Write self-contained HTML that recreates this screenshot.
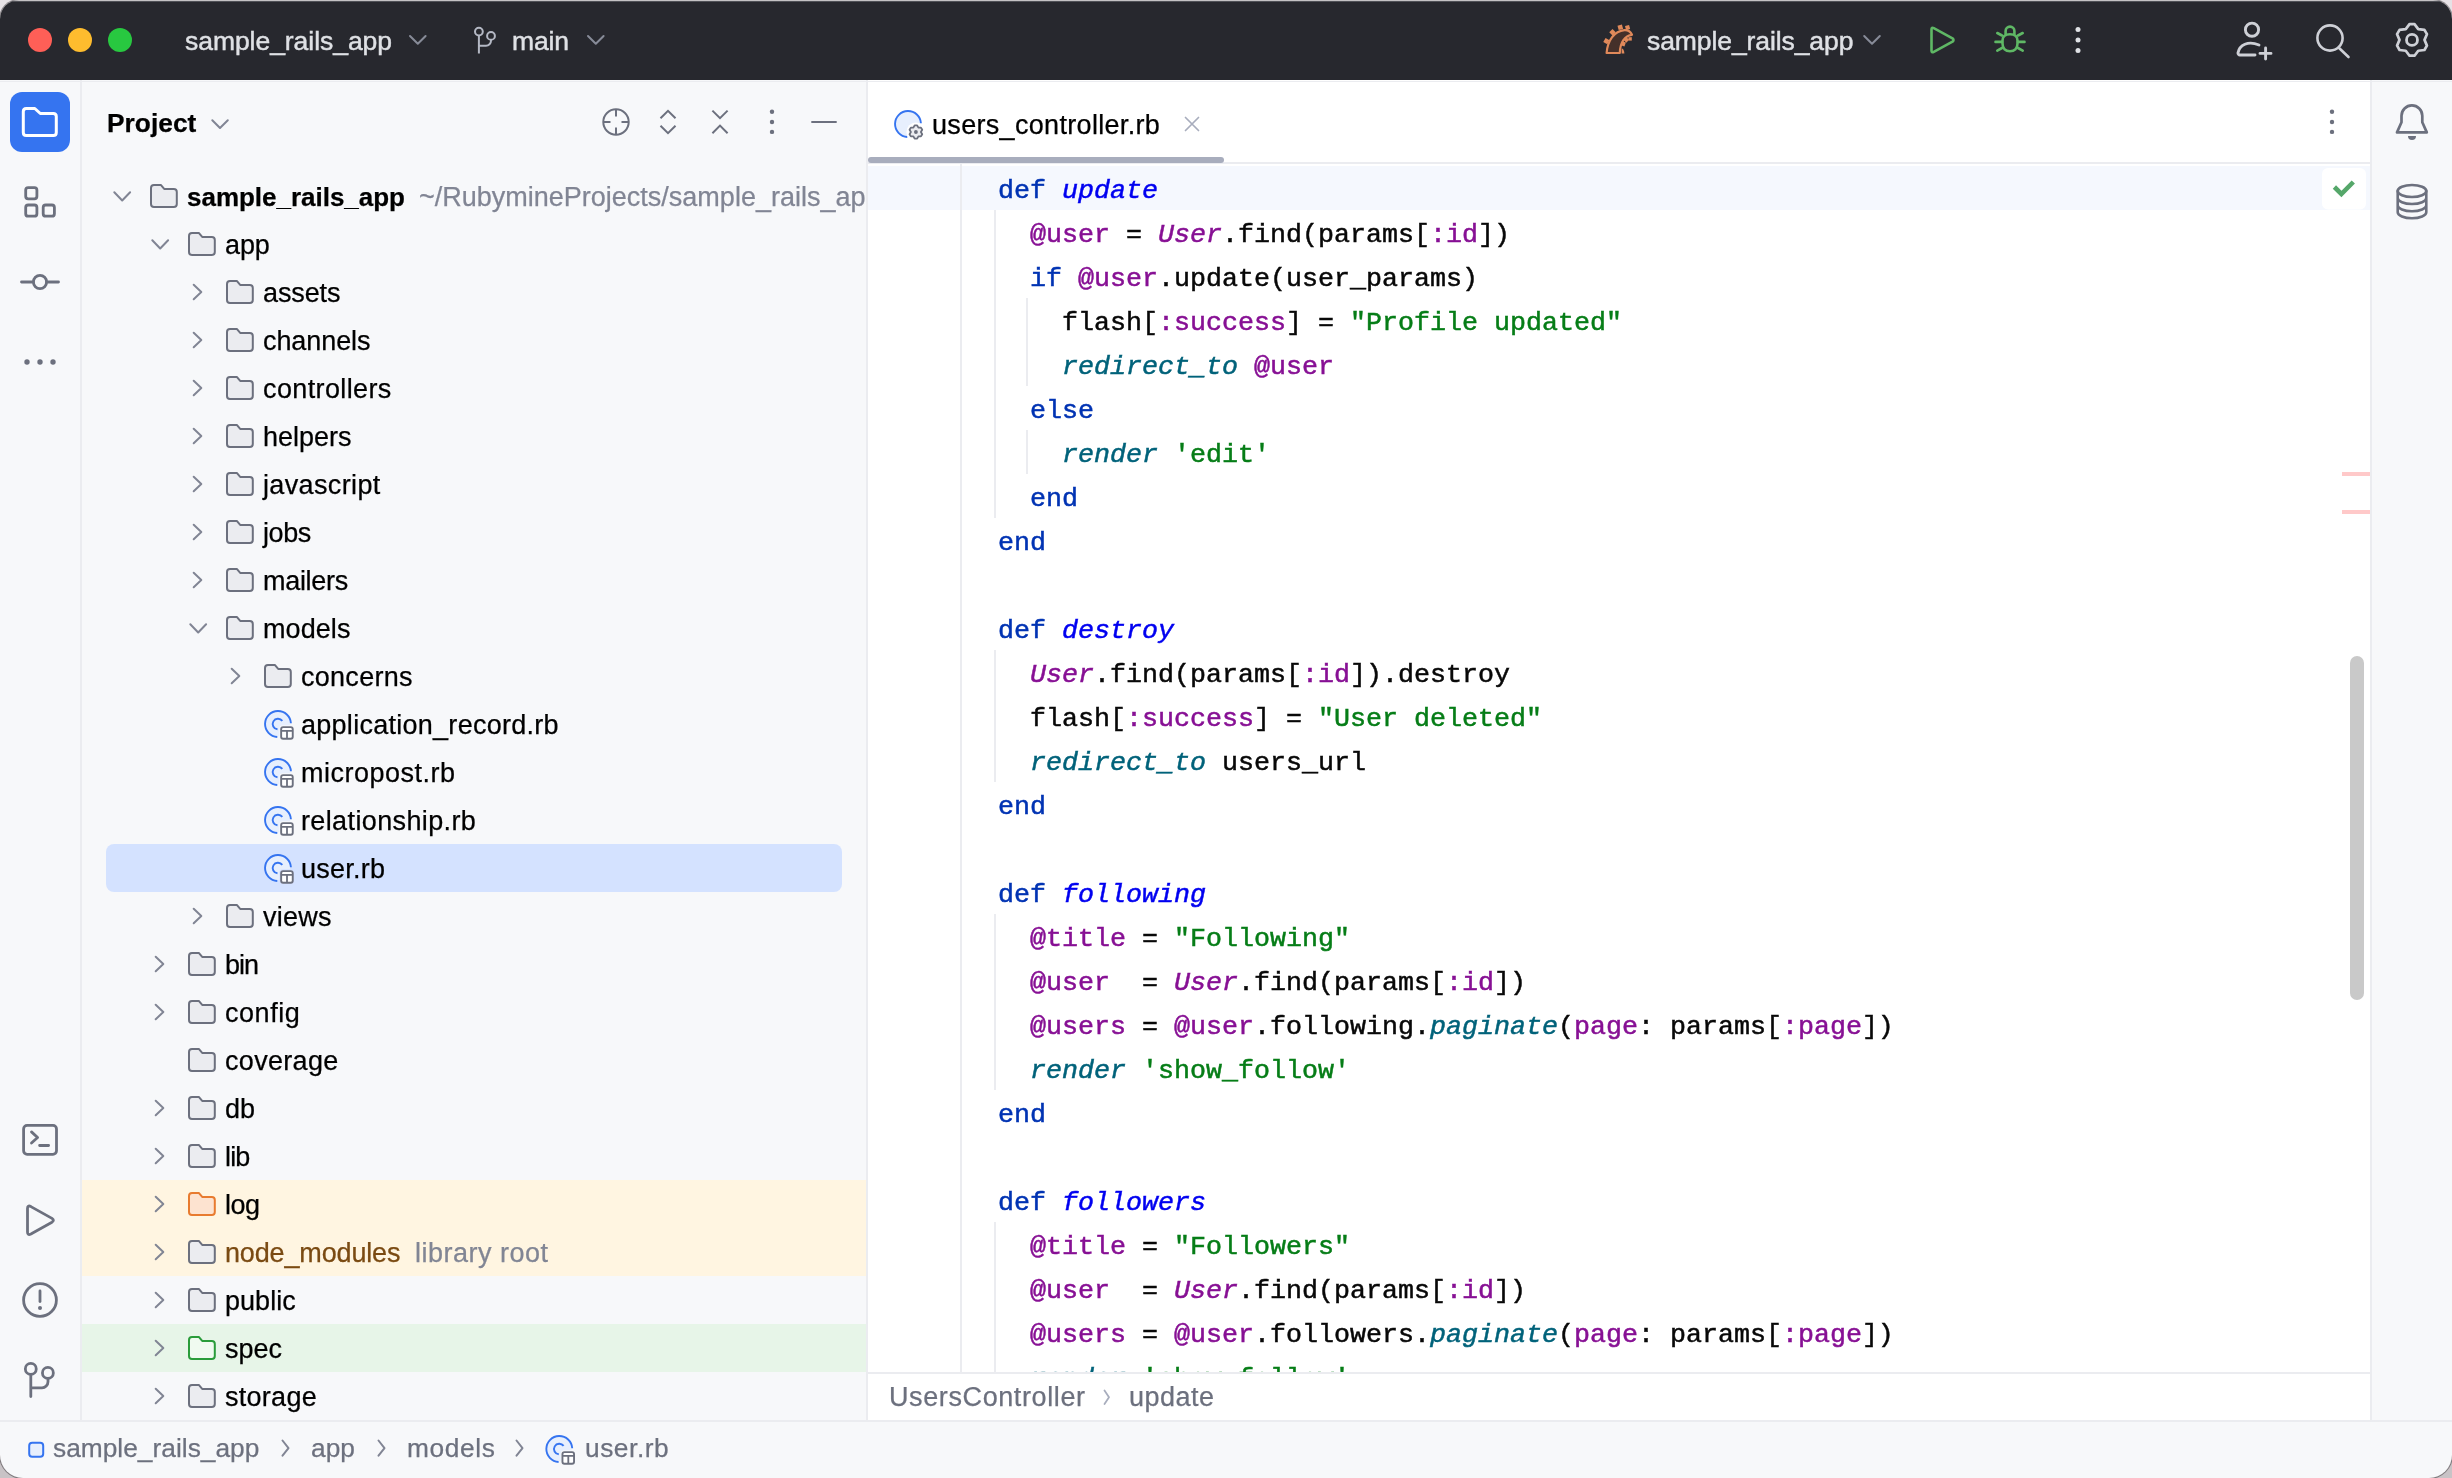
<!DOCTYPE html>
<html><head><meta charset="utf-8">
<style>
*{margin:0;padding:0;box-sizing:border-box}
html,body{width:2452px;height:1478px;overflow:hidden;background:linear-gradient(#e6e2e6 0,#e6e2e6 80px,#c8c3c6 1440px)}
body{font-family:"Liberation Sans",sans-serif;position:relative}
.t,.code{will-change:transform}.t{-webkit-text-stroke:0.25px}.code{-webkit-text-stroke:0.5px}.tb{-webkit-text-stroke:0.45px}
.win{position:absolute;left:0;top:0;width:2452px;height:1478px;border-radius:19px 19px 23px 23px;overflow:hidden;background:#f7f8fa;box-shadow:0 0 0 1px rgba(70,64,68,.55)}
.t{position:absolute;line-height:48px;white-space:pre}
.b{position:absolute}
svg{position:absolute;left:0;top:0;overflow:visible}
.code{position:absolute;font-family:"Liberation Mono",monospace;font-size:26.67px;line-height:44px;white-space:pre;color:#080808}
.k{color:#0033b3}.m{color:#0000f0;font-style:italic}.v{color:#871094}.c{color:#871094;font-style:italic}.s{color:#067d17}.f{color:#00627a;font-style:italic}
</style></head><body>
<div class="win">

<div class="b" style="left:0;top:0;width:2452px;height:80px;background:#27282e"></div>
<div class="b" style="left:80px;top:80px;width:2px;height:1340px;background:#ebecf0"></div>
<div class="b" style="left:82px;top:1180px;width:784px;height:96px;background:#fff5e1"></div>
<div class="b" style="left:82px;top:1324px;width:784px;height:48px;background:#e7f5e8"></div>
<div class="b" style="left:106px;top:844px;width:736px;height:48px;background:#d4e2ff;border-radius:8px"></div>
<div class="b" style="left:866px;top:80px;width:2px;height:1342px;background:#ebecf0"></div>
<div class="b" style="left:868px;top:80px;width:1502px;height:1340px;background:#fff"></div>
<div class="b" style="left:868px;top:162px;width:1502px;height:2px;background:#ebecf0"></div>
<div class="b" style="left:868px;top:166px;width:1502px;height:44px;background:#f5f8fe"></div>
<div class="b" style="left:868px;top:157px;width:356px;height:6px;background:#a8adbd;border-radius:3px"></div>
<div class="b" style="left:868px;top:1372px;width:1502px;height:2px;background:#ebecf0"></div>
<div class="b" style="left:868px;top:1374px;width:1502px;height:46px;background:#fff"></div>
<div class="b" style="left:0;top:81px;width:2452px;height:1px;background:#ebecf0"></div>
<div class="b" style="left:2370px;top:80px;width:2px;height:1342px;background:#ebecf0"></div>
<div class="b" style="left:0;top:1420px;width:2452px;height:2px;background:#ebecf0"></div>
<svg width="2452" height="80">
<circle cx="40" cy="40" r="12" fill="#ff5f57"/><circle cx="80" cy="40" r="12" fill="#febc2e"/><circle cx="120" cy="40" r="12" fill="#28c840"/>
<path d="M410.0,36 l7.8,7.8 l7.8,-7.8" fill="none" stroke="#878b98" stroke-width="2" stroke-linecap="round" stroke-linejoin="round"/>
<path d="M588.0,36 l7.8,7.8 l7.8,-7.8" fill="none" stroke="#878b98" stroke-width="2" stroke-linecap="round" stroke-linejoin="round"/>
<path d="M1864.2,36 l7.8,7.8 l7.8,-7.8" fill="none" stroke="#878b98" stroke-width="2" stroke-linecap="round" stroke-linejoin="round"/>
<g fill="none" stroke="#b4b8c4" stroke-width="2" stroke-linecap="butt"><circle cx="478.9" cy="31.6" r="3.9"/><circle cx="491" cy="35.9" r="3.9"/><path d="M478.9,35.5 V53.5"/><path d="M478.9,45.7 H486 a5,5 0 0 0 5,-5 V39.8"/></g>
<path d="M1931.5,29.5 Q1931.5,27 1933.8,28.2 L1952.5,38.3 Q1954.5,40 1952.5,41.7 L1933.8,51.8 Q1931.5,53 1931.5,50.5 Z" fill="none" stroke="#5fb865" stroke-width="2.6" stroke-linejoin="round"/>
<g fill="none" stroke="#5fb865" stroke-width="2.6" stroke-linecap="round"><path d="M2002.5,40.5 C2002.5,36 2005,34.3 2010,34.3 C2015,34.3 2017.5,36 2017.5,40.5 V43.5 C2017.5,48.5 2014.5,51.2 2010,51.2 C2005.5,51.2 2002.5,48.5 2002.5,43.5 Z"/><path d="M2005.6,34 V31 a4.4,4.4 0 0 1 8.8,0 V34"/><path d="M1997.3,33 L2002,35.5 M1995.5,41.9 H2002 M1997.3,50.6 L2002,48 M2022.7,33 L2018,35.5 M2024.5,41.9 H2018 M2022.7,50.6 L2018,48"/></g>
<g fill="#dfe1e5"><circle cx="2078" cy="29.6" r="2.5"/><circle cx="2078" cy="40.1" r="2.5"/><circle cx="2078" cy="50.6" r="2.5"/></g>
<g fill="none" stroke="#ced0d6" stroke-width="2.9" stroke-linecap="round"><circle cx="2252" cy="29.7" r="6.6"/><path d="M2255,55 H2240 a2,2 0 0 1 -2,-2.3 C2239.5,45 2248,40.5 2259,45"/><path d="M2265.6,48 V59 M2260,53.4 H2271"/></g>
<g fill="none" stroke="#ced0d6" stroke-width="2.6" stroke-linecap="round"><circle cx="2330" cy="38" r="12.6"/><path d="M2339.3,48.3 L2348.5,57"/></g>
<path d="M2409.50,24.10 L2414.50,24.10 L2418.25,29.07 L2424.43,29.83 L2426.94,34.17 L2424.50,39.90 L2426.94,45.63 L2424.43,49.97 L2418.25,50.73 L2414.50,55.70 L2409.50,55.70 L2405.75,50.73 L2399.57,49.97 L2397.06,45.63 L2399.50,39.90 L2397.06,34.17 L2399.57,29.83 L2405.75,29.07 Z" fill="none" stroke="#ced0d6" stroke-width="2.7" stroke-linejoin="round"/>
<circle cx="2412" cy="39.9" r="5.5" fill="none" stroke="#ced0d6" stroke-width="2.8"/>
<path d="M1606.6,53 C1607.5,41 1614,31 1624.5,30.2 C1628,30 1630.5,31.5 1632,34.8 C1625,35.5 1620,42 1619.8,53 Z" fill="#45302a" stroke="#e0895a" stroke-width="2.2" stroke-linejoin="round"/>
<g fill="#e0895a"><rect x="1618" y="25" width="4.6" height="4.6" transform="rotate(-15 1620.2 27.3)"/><rect x="1625.5" y="25.5" width="4.2" height="4.2" transform="rotate(-15 1627.6 27.7)"/><rect x="1610.2" y="29.9" width="4.6" height="4.6" transform="rotate(45 1612.5 32.2)"/><rect x="1604.1" y="38.8" width="4.6" height="4.6" transform="rotate(30 1606.4 41.1)"/><rect x="1624.3" y="37.8" width="4" height="4" transform="rotate(45 1626.3 39.8)"/><rect x="1628.4" y="37.2" width="3.4" height="3.4"/><rect x="1621.5" y="41.8" width="3.8" height="4.2" transform="rotate(20 1623.4 43.8)"/><path d="M1621.6,48.5 Q1624,48.5 1624.4,53.6 L1621.6,53.6 Z"/></g>
</svg>
<div class="t tb" style="left:184.50px;top:16.81px;font-size:26.50px;color:#dfe1e5;letter-spacing:-0.047px;">sample_rails_app</div>
<div class="t tb" style="left:512.00px;top:16.81px;font-size:26.50px;color:#dfe1e5;letter-spacing:-0.151px;">main</div>
<div class="t tb" style="left:1646.60px;top:16.81px;font-size:26.50px;color:#dfe1e5;letter-spacing:-0.087px;">sample_rails_app</div>
<svg width="2452" height="1478">
<rect x="10" y="92" width="60" height="60" rx="12" fill="#3574f0"/>
<path d="M23.3,111.5 Q23.3,108.5 26.3,108.5 H34.8 L40.3,113.5 H53.3 Q56.3,113.5 56.3,116.5 V132.4 Q56.3,135.4 53.3,135.4 H26.3 Q23.3,135.4 23.3,132.4 Z" fill="none" stroke="#fff" stroke-width="3" stroke-linejoin="round"/>
<g fill="none" stroke="#6c707e" stroke-width="2.8" stroke-linecap="round" stroke-linejoin="round"><rect x="25.7" y="187.6" width="11.2" height="11.2" rx="2.5"/><rect x="25.7" y="205" width="11.2" height="11.2" rx="2.5"/><rect x="43.2" y="205" width="11.2" height="11.2" rx="2.5"/></g>
<g fill="none" stroke="#6c707e" stroke-width="2.8" stroke-linecap="round" stroke-linejoin="round"><circle cx="40" cy="282" r="6.6"/><path d="M21.5,282 H33.4 M46.6,282 H58.5"/></g>
<g fill="#6c707e"><circle cx="27" cy="362" r="2.7"/><circle cx="40" cy="362" r="2.7"/><circle cx="53" cy="362" r="2.7"/></g>
<g fill="none" stroke="#6c707e" stroke-width="2.8" stroke-linecap="round" stroke-linejoin="round"><rect x="23.6" y="1125.4" width="32.9" height="28.9" rx="3.5"/><path d="M31.5,1131.9 L37.6,1137.5 L31.5,1143 M39.6,1145.5 H48.6"/></g>
<path d="M27.5,1208.6 Q27.5,1204.8 30.9,1206.6 L52,1218.4 Q54.8,1220.3 52,1222.2 L30.9,1234 Q27.5,1235.8 27.5,1232 Z" fill="none" stroke="#6c707e" stroke-width="2.8" stroke-linecap="round" stroke-linejoin="round"/>
<g fill="none" stroke="#6c707e" stroke-width="2.8" stroke-linecap="round" stroke-linejoin="round"><circle cx="40" cy="1300" r="16.4"/><path d="M40,1291 V1301.5"/></g><circle cx="40" cy="1308" r="2" fill="#6c707e"/>
<g fill="none" stroke="#6c707e" stroke-width="2.8" stroke-linecap="round" stroke-linejoin="round"><circle cx="30.8" cy="1368.9" r="5.45"/><circle cx="47.9" cy="1372.9" r="5.45"/><path d="M30.8,1374.4 V1396.6 M30.8,1387.8 H42 a6,6 0 0 0 6,-6 V1378.4"/></g>
<g fill="none" stroke="#6c707e" stroke-width="2" stroke-linecap="butt" stroke-linejoin="miter"><circle cx="616" cy="122" r="12.7"/><path d="M616,109.3 V116.5 M616,127.5 V134.7 M603.3,122 H610.5 M621.5,122 H628.7"/></g>
<g fill="none" stroke="#6c707e" stroke-width="2" stroke-linecap="butt" stroke-linejoin="miter"><path d="M660.5,118.3 L668,110.8 L675.5,118.3 M660.5,125.7 L668,133.2 L675.5,125.7"/></g>
<g fill="none" stroke="#6c707e" stroke-width="2" stroke-linecap="butt" stroke-linejoin="miter"><path d="M712.4,110.6 L720,118.2 L727.6,110.6 M712.4,133.2 L720,125.6 L727.6,133.2"/></g>
<g fill="#6c707e"><circle cx="772" cy="111.8" r="2.2"/><circle cx="772" cy="122" r="2.2"/><circle cx="772" cy="131.9" r="2.2"/></g>
<path d="M811.3,122 H836.7" fill="none" stroke="#6c707e" stroke-width="2" stroke-linecap="butt" stroke-linejoin="miter"/>
<path d="M212.3,120.3 L220,128 L227.8,120.3" fill="none" stroke="#818594" stroke-width="2" stroke-linecap="round" stroke-linejoin="round"/>
</svg>
<div class="t" style="left:107.10px;top:99.08px;font-size:26.30px;color:#000;font-weight:bold;letter-spacing:0.024px;">Project</div>
<svg width="2452" height="1478">
<path d="M114.3,192.2 l7.9,8.3 l7.9,-8.3" fill="none" stroke="#818594" stroke-width="2" stroke-linecap="round" stroke-linejoin="round"/>
<path transform="translate(150.0,184.0)" d="M1,3.9 Q1,0.9 4,0.9 H10.8 L14.2,4.9 H23.8 Q26.8,4.9 26.8,7.9 V19.9 Q26.8,22.9 23.8,22.9 H4 Q1,22.9 1,19.9 Z" fill="#ebecf0" stroke="#6c707e" stroke-width="2" stroke-linejoin="round"/>
<path d="M152.3,240.2 l7.9,8.3 l7.9,-8.3" fill="none" stroke="#818594" stroke-width="2" stroke-linecap="round" stroke-linejoin="round"/>
<path transform="translate(188.0,232.0)" d="M1,3.9 Q1,0.9 4,0.9 H10.8 L14.2,4.9 H23.8 Q26.8,4.9 26.8,7.9 V19.9 Q26.8,22.9 23.8,22.9 H4 Q1,22.9 1,19.9 Z" fill="#ebecf0" stroke="#6c707e" stroke-width="2" stroke-linejoin="round"/>
<path d="M193.7,284.7 l7.6,7.3 l-7.6,7.3" fill="none" stroke="#818594" stroke-width="2" stroke-linecap="round" stroke-linejoin="round"/>
<path transform="translate(226.0,280.0)" d="M1,3.9 Q1,0.9 4,0.9 H10.8 L14.2,4.9 H23.8 Q26.8,4.9 26.8,7.9 V19.9 Q26.8,22.9 23.8,22.9 H4 Q1,22.9 1,19.9 Z" fill="#ebecf0" stroke="#6c707e" stroke-width="2" stroke-linejoin="round"/>
<path d="M193.7,332.7 l7.6,7.3 l-7.6,7.3" fill="none" stroke="#818594" stroke-width="2" stroke-linecap="round" stroke-linejoin="round"/>
<path transform="translate(226.0,328.0)" d="M1,3.9 Q1,0.9 4,0.9 H10.8 L14.2,4.9 H23.8 Q26.8,4.9 26.8,7.9 V19.9 Q26.8,22.9 23.8,22.9 H4 Q1,22.9 1,19.9 Z" fill="#ebecf0" stroke="#6c707e" stroke-width="2" stroke-linejoin="round"/>
<path d="M193.7,380.7 l7.6,7.3 l-7.6,7.3" fill="none" stroke="#818594" stroke-width="2" stroke-linecap="round" stroke-linejoin="round"/>
<path transform="translate(226.0,376.0)" d="M1,3.9 Q1,0.9 4,0.9 H10.8 L14.2,4.9 H23.8 Q26.8,4.9 26.8,7.9 V19.9 Q26.8,22.9 23.8,22.9 H4 Q1,22.9 1,19.9 Z" fill="#ebecf0" stroke="#6c707e" stroke-width="2" stroke-linejoin="round"/>
<path d="M193.7,428.7 l7.6,7.3 l-7.6,7.3" fill="none" stroke="#818594" stroke-width="2" stroke-linecap="round" stroke-linejoin="round"/>
<path transform="translate(226.0,424.0)" d="M1,3.9 Q1,0.9 4,0.9 H10.8 L14.2,4.9 H23.8 Q26.8,4.9 26.8,7.9 V19.9 Q26.8,22.9 23.8,22.9 H4 Q1,22.9 1,19.9 Z" fill="#ebecf0" stroke="#6c707e" stroke-width="2" stroke-linejoin="round"/>
<path d="M193.7,476.7 l7.6,7.3 l-7.6,7.3" fill="none" stroke="#818594" stroke-width="2" stroke-linecap="round" stroke-linejoin="round"/>
<path transform="translate(226.0,472.0)" d="M1,3.9 Q1,0.9 4,0.9 H10.8 L14.2,4.9 H23.8 Q26.8,4.9 26.8,7.9 V19.9 Q26.8,22.9 23.8,22.9 H4 Q1,22.9 1,19.9 Z" fill="#ebecf0" stroke="#6c707e" stroke-width="2" stroke-linejoin="round"/>
<path d="M193.7,524.7 l7.6,7.3 l-7.6,7.3" fill="none" stroke="#818594" stroke-width="2" stroke-linecap="round" stroke-linejoin="round"/>
<path transform="translate(226.0,520.0)" d="M1,3.9 Q1,0.9 4,0.9 H10.8 L14.2,4.9 H23.8 Q26.8,4.9 26.8,7.9 V19.9 Q26.8,22.9 23.8,22.9 H4 Q1,22.9 1,19.9 Z" fill="#ebecf0" stroke="#6c707e" stroke-width="2" stroke-linejoin="round"/>
<path d="M193.7,572.7 l7.6,7.3 l-7.6,7.3" fill="none" stroke="#818594" stroke-width="2" stroke-linecap="round" stroke-linejoin="round"/>
<path transform="translate(226.0,568.0)" d="M1,3.9 Q1,0.9 4,0.9 H10.8 L14.2,4.9 H23.8 Q26.8,4.9 26.8,7.9 V19.9 Q26.8,22.9 23.8,22.9 H4 Q1,22.9 1,19.9 Z" fill="#ebecf0" stroke="#6c707e" stroke-width="2" stroke-linejoin="round"/>
<path d="M190.3,624.2 l7.9,8.3 l7.9,-8.3" fill="none" stroke="#818594" stroke-width="2" stroke-linecap="round" stroke-linejoin="round"/>
<path transform="translate(226.0,616.0)" d="M1,3.9 Q1,0.9 4,0.9 H10.8 L14.2,4.9 H23.8 Q26.8,4.9 26.8,7.9 V19.9 Q26.8,22.9 23.8,22.9 H4 Q1,22.9 1,19.9 Z" fill="#ebecf0" stroke="#6c707e" stroke-width="2" stroke-linejoin="round"/>
<path d="M231.7,668.7 l7.6,7.3 l-7.6,7.3" fill="none" stroke="#818594" stroke-width="2" stroke-linecap="round" stroke-linejoin="round"/>
<path transform="translate(264.0,664.0)" d="M1,3.9 Q1,0.9 4,0.9 H10.8 L14.2,4.9 H23.8 Q26.8,4.9 26.8,7.9 V19.9 Q26.8,22.9 23.8,22.9 H4 Q1,22.9 1,19.9 Z" fill="#ebecf0" stroke="#6c707e" stroke-width="2" stroke-linejoin="round"/>
<circle cx="278.0" cy="724.0" r="12.2" fill="#e7effd"/><path d="M290.93,723.30 A12.95,12.95 0 1 0 277.30,736.93" fill="none" stroke="#3574f0" stroke-width="1.9"/><path d="M282.30,720.90 A5.3,5.3 0 1 0 277.50,729.28" fill="none" stroke="#3574f0" stroke-width="1.9"/><rect x="279.35" y="725.35" width="15.2" height="15.2" rx="3.5" fill="#f7f8fa"/><rect x="281.15" y="727.15" width="11.6" height="11.6" rx="2" fill="#fff" stroke="#6c707e" stroke-width="1.9"/><path d="M281.15,730.80 H292.75 M287.00,730.80 V738.75" stroke="#6c707e" stroke-width="1.8"/>
<circle cx="278.0" cy="772.0" r="12.2" fill="#e7effd"/><path d="M290.93,771.30 A12.95,12.95 0 1 0 277.30,784.93" fill="none" stroke="#3574f0" stroke-width="1.9"/><path d="M282.30,768.90 A5.3,5.3 0 1 0 277.50,777.28" fill="none" stroke="#3574f0" stroke-width="1.9"/><rect x="279.35" y="773.35" width="15.2" height="15.2" rx="3.5" fill="#f7f8fa"/><rect x="281.15" y="775.15" width="11.6" height="11.6" rx="2" fill="#fff" stroke="#6c707e" stroke-width="1.9"/><path d="M281.15,778.80 H292.75 M287.00,778.80 V786.75" stroke="#6c707e" stroke-width="1.8"/>
<circle cx="278.0" cy="820.0" r="12.2" fill="#e7effd"/><path d="M290.93,819.30 A12.95,12.95 0 1 0 277.30,832.93" fill="none" stroke="#3574f0" stroke-width="1.9"/><path d="M282.30,816.90 A5.3,5.3 0 1 0 277.50,825.28" fill="none" stroke="#3574f0" stroke-width="1.9"/><rect x="279.35" y="821.35" width="15.2" height="15.2" rx="3.5" fill="#f7f8fa"/><rect x="281.15" y="823.15" width="11.6" height="11.6" rx="2" fill="#fff" stroke="#6c707e" stroke-width="1.9"/><path d="M281.15,826.80 H292.75 M287.00,826.80 V834.75" stroke="#6c707e" stroke-width="1.8"/>
<circle cx="278.0" cy="868.0" r="12.2" fill="#e7effd"/><path d="M290.93,867.30 A12.95,12.95 0 1 0 277.30,880.93" fill="none" stroke="#3574f0" stroke-width="1.9"/><path d="M282.30,864.90 A5.3,5.3 0 1 0 277.50,873.28" fill="none" stroke="#3574f0" stroke-width="1.9"/><rect x="279.35" y="869.35" width="15.2" height="15.2" rx="3.5" fill="#d5e1ff"/><rect x="281.15" y="871.15" width="11.6" height="11.6" rx="2" fill="#fff" stroke="#6c707e" stroke-width="1.9"/><path d="M281.15,874.80 H292.75 M287.00,874.80 V882.75" stroke="#6c707e" stroke-width="1.8"/>
<path d="M193.7,908.7 l7.6,7.3 l-7.6,7.3" fill="none" stroke="#818594" stroke-width="2" stroke-linecap="round" stroke-linejoin="round"/>
<path transform="translate(226.0,904.0)" d="M1,3.9 Q1,0.9 4,0.9 H10.8 L14.2,4.9 H23.8 Q26.8,4.9 26.8,7.9 V19.9 Q26.8,22.9 23.8,22.9 H4 Q1,22.9 1,19.9 Z" fill="#ebecf0" stroke="#6c707e" stroke-width="2" stroke-linejoin="round"/>
<path d="M155.7,956.7 l7.6,7.3 l-7.6,7.3" fill="none" stroke="#818594" stroke-width="2" stroke-linecap="round" stroke-linejoin="round"/>
<path transform="translate(188.0,952.0)" d="M1,3.9 Q1,0.9 4,0.9 H10.8 L14.2,4.9 H23.8 Q26.8,4.9 26.8,7.9 V19.9 Q26.8,22.9 23.8,22.9 H4 Q1,22.9 1,19.9 Z" fill="#ebecf0" stroke="#6c707e" stroke-width="2" stroke-linejoin="round"/>
<path d="M155.7,1004.7 l7.6,7.3 l-7.6,7.3" fill="none" stroke="#818594" stroke-width="2" stroke-linecap="round" stroke-linejoin="round"/>
<path transform="translate(188.0,1000.0)" d="M1,3.9 Q1,0.9 4,0.9 H10.8 L14.2,4.9 H23.8 Q26.8,4.9 26.8,7.9 V19.9 Q26.8,22.9 23.8,22.9 H4 Q1,22.9 1,19.9 Z" fill="#ebecf0" stroke="#6c707e" stroke-width="2" stroke-linejoin="round"/>
<path transform="translate(188.0,1048.0)" d="M1,3.9 Q1,0.9 4,0.9 H10.8 L14.2,4.9 H23.8 Q26.8,4.9 26.8,7.9 V19.9 Q26.8,22.9 23.8,22.9 H4 Q1,22.9 1,19.9 Z" fill="#ebecf0" stroke="#6c707e" stroke-width="2" stroke-linejoin="round"/>
<path d="M155.7,1100.7 l7.6,7.3 l-7.6,7.3" fill="none" stroke="#818594" stroke-width="2" stroke-linecap="round" stroke-linejoin="round"/>
<path transform="translate(188.0,1096.0)" d="M1,3.9 Q1,0.9 4,0.9 H10.8 L14.2,4.9 H23.8 Q26.8,4.9 26.8,7.9 V19.9 Q26.8,22.9 23.8,22.9 H4 Q1,22.9 1,19.9 Z" fill="#ebecf0" stroke="#6c707e" stroke-width="2" stroke-linejoin="round"/>
<path d="M155.7,1148.7 l7.6,7.3 l-7.6,7.3" fill="none" stroke="#818594" stroke-width="2" stroke-linecap="round" stroke-linejoin="round"/>
<path transform="translate(188.0,1144.0)" d="M1,3.9 Q1,0.9 4,0.9 H10.8 L14.2,4.9 H23.8 Q26.8,4.9 26.8,7.9 V19.9 Q26.8,22.9 23.8,22.9 H4 Q1,22.9 1,19.9 Z" fill="#ebecf0" stroke="#6c707e" stroke-width="2" stroke-linejoin="round"/>
<path d="M155.7,1196.7 l7.6,7.3 l-7.6,7.3" fill="none" stroke="#818594" stroke-width="2" stroke-linecap="round" stroke-linejoin="round"/>
<path transform="translate(188.0,1192.0)" d="M1,3.9 Q1,0.9 4,0.9 H10.8 L14.2,4.9 H23.8 Q26.8,4.9 26.8,7.9 V19.9 Q26.8,22.9 23.8,22.9 H4 Q1,22.9 1,19.9 Z" fill="#fde3d0" stroke="#e87b2f" stroke-width="2" stroke-linejoin="round"/>
<path d="M155.7,1244.7 l7.6,7.3 l-7.6,7.3" fill="none" stroke="#818594" stroke-width="2" stroke-linecap="round" stroke-linejoin="round"/>
<path transform="translate(188.0,1240.0)" d="M1,3.9 Q1,0.9 4,0.9 H10.8 L14.2,4.9 H23.8 Q26.8,4.9 26.8,7.9 V19.9 Q26.8,22.9 23.8,22.9 H4 Q1,22.9 1,19.9 Z" fill="#ebecf0" stroke="#6c707e" stroke-width="2" stroke-linejoin="round"/>
<path d="M155.7,1292.7 l7.6,7.3 l-7.6,7.3" fill="none" stroke="#818594" stroke-width="2" stroke-linecap="round" stroke-linejoin="round"/>
<path transform="translate(188.0,1288.0)" d="M1,3.9 Q1,0.9 4,0.9 H10.8 L14.2,4.9 H23.8 Q26.8,4.9 26.8,7.9 V19.9 Q26.8,22.9 23.8,22.9 H4 Q1,22.9 1,19.9 Z" fill="#ebecf0" stroke="#6c707e" stroke-width="2" stroke-linejoin="round"/>
<path d="M155.7,1340.7 l7.6,7.3 l-7.6,7.3" fill="none" stroke="#818594" stroke-width="2" stroke-linecap="round" stroke-linejoin="round"/>
<path transform="translate(188.0,1336.0)" d="M1,3.9 Q1,0.9 4,0.9 H10.8 L14.2,4.9 H23.8 Q26.8,4.9 26.8,7.9 V19.9 Q26.8,22.9 23.8,22.9 H4 Q1,22.9 1,19.9 Z" fill="#f0faf0" stroke="#2a9c3a" stroke-width="2" stroke-linejoin="round"/>
<path d="M155.7,1388.7 l7.6,7.3 l-7.6,7.3" fill="none" stroke="#818594" stroke-width="2" stroke-linecap="round" stroke-linejoin="round"/>
<path transform="translate(188.0,1384.0)" d="M1,3.9 Q1,0.9 4,0.9 H10.8 L14.2,4.9 H23.8 Q26.8,4.9 26.8,7.9 V19.9 Q26.8,22.9 23.8,22.9 H4 Q1,22.9 1,19.9 Z" fill="#ebecf0" stroke="#6c707e" stroke-width="2" stroke-linejoin="round"/>
</svg>
<div class="b" style="left:82px;top:160px;width:784px;height:1260px;overflow:hidden"><div class="b" style="left:-82px;top:-160px;width:2452px;height:1478px">
<div class="t" style="left:186.50px;top:172.99px;font-size:26.00px;color:#000;font-weight:bold;letter-spacing:-0.016px;">sample_rails_app</div>
<div class="t" style="left:419.00px;top:172.64px;font-size:27.00px;color:#818594;">~/RubymineProjects/sample_rails_app</div>
<div class="t" style="left:224.50px;top:220.64px;font-size:27.00px;color:#000;letter-spacing:-0.118px;">app</div>
<div class="t" style="left:262.50px;top:268.64px;font-size:27.00px;color:#000;letter-spacing:-0.126px;">assets</div>
<div class="t" style="left:262.50px;top:316.64px;font-size:27.00px;color:#000;letter-spacing:-0.083px;">channels</div>
<div class="t" style="left:262.50px;top:364.64px;font-size:27.00px;color:#000;letter-spacing:0.375px;">controllers</div>
<div class="t" style="left:262.50px;top:412.64px;font-size:27.00px;color:#000;letter-spacing:0.007px;">helpers</div>
<div class="t" style="left:263.18px;top:460.64px;font-size:27.00px;color:#000;letter-spacing:0.364px;">javascript</div>
<div class="t" style="left:263.18px;top:508.64px;font-size:27.00px;color:#000;letter-spacing:-0.398px;">jobs</div>
<div class="t" style="left:262.50px;top:556.64px;font-size:27.00px;color:#000;letter-spacing:-0.303px;">mailers</div>
<div class="t" style="left:262.50px;top:604.64px;font-size:27.00px;color:#000;letter-spacing:0.070px;">models</div>
<div class="t" style="left:300.50px;top:652.64px;font-size:27.00px;color:#000;letter-spacing:0.276px;">concerns</div>
<div class="t" style="left:300.50px;top:700.64px;font-size:27.00px;color:#000;letter-spacing:0.272px;">application_record.rb</div>
<div class="t" style="left:300.50px;top:748.64px;font-size:27.00px;color:#000;letter-spacing:0.495px;">micropost.rb</div>
<div class="t" style="left:300.50px;top:796.64px;font-size:27.00px;color:#000;letter-spacing:0.372px;">relationship.rb</div>
<div class="t" style="left:300.50px;top:844.64px;font-size:27.00px;color:#000;letter-spacing:0.227px;">user.rb</div>
<div class="t" style="left:262.50px;top:892.64px;font-size:27.00px;color:#000;letter-spacing:0.243px;">views</div>
<div class="t" style="left:224.50px;top:940.64px;font-size:27.00px;color:#000;letter-spacing:-1.059px;">bin</div>
<div class="t" style="left:224.50px;top:988.64px;font-size:27.00px;color:#000;letter-spacing:0.533px;">config</div>
<div class="t" style="left:224.50px;top:1036.64px;font-size:27.00px;color:#000;letter-spacing:0.317px;">coverage</div>
<div class="t" style="left:224.50px;top:1084.64px;font-size:27.00px;color:#000;letter-spacing:-0.124px;">db</div>
<div class="t" style="left:224.50px;top:1132.64px;font-size:27.00px;color:#000;letter-spacing:-0.864px;">lib</div>
<div class="t" style="left:224.50px;top:1180.64px;font-size:27.00px;color:#000;letter-spacing:-0.509px;">log</div>
<div class="t" style="left:224.50px;top:1228.64px;font-size:27.00px;color:#7a4a12;letter-spacing:-0.150px;">node_modules</div>
<div class="t" style="left:414.60px;top:1228.64px;font-size:27.00px;color:#818594;letter-spacing:0.496px;">library root</div>
<div class="t" style="left:224.50px;top:1276.64px;font-size:27.00px;color:#000;letter-spacing:0.030px;">public</div>
<div class="t" style="left:224.50px;top:1324.64px;font-size:27.00px;color:#000;letter-spacing:-0.008px;">spec</div>
<div class="t" style="left:224.50px;top:1372.64px;font-size:27.00px;color:#000;letter-spacing:0.276px;">storage</div>
</div></div>
<svg width="2452" height="1478">
<circle cx="908.0" cy="124.0" r="12.2" fill="#e7effd"/><path d="M920.93,123.30 A12.95,12.95 0 1 0 907.30,136.93" fill="none" stroke="#3574f0" stroke-width="1.9"/>
<circle cx="915.9" cy="132" r="9.5" fill="#fff"/>
<path d="M914.62,125.42 L917.18,125.42 L918.40,127.67 L920.96,127.60 L922.23,129.82 L920.90,132.00 L922.23,134.18 L920.96,136.40 L918.40,136.33 L917.18,138.58 L914.62,138.58 L913.40,136.33 L910.84,136.40 L909.57,134.18 L910.90,132.00 L909.57,129.82 L910.84,127.60 L913.40,127.67 Z" fill="#ebecf0" stroke="#6c707e" stroke-width="1.8" stroke-linejoin="round"/>
<circle cx="915.9" cy="132" r="1.9" fill="#6c707e"/>
<path d="M1185.5,117.5 L1198.5,130.5 M1198.5,117.5 L1185.5,130.5" stroke="#a8adbd" stroke-width="1.7" stroke-linecap="round"/>
<g fill="#6c707e"><circle cx="2332" cy="111.8" r="2.2"/><circle cx="2332" cy="122" r="2.2"/><circle cx="2332" cy="131.9" r="2.2"/></g>
<rect x="2322" y="168" width="44" height="41.5" rx="6" fill="#fff"/>
<path d="M2334.4,187 L2341.4,194 L2353.3,182" fill="none" stroke="#55a76a" stroke-width="4.6"/>
<g fill="none" stroke="#6c707e" stroke-width="2.7" stroke-linecap="round" stroke-linejoin="round"><path d="M2401.5,122.2 V115.8 A10.4,10.4 0 0 1 2422.3,115.8 V122.2 L2426.8,132.4 H2397 Z"/></g>
<path d="M2408,136 H2416 A4,4 0 0 1 2408,136 Z" fill="#6c707e"/>
<g fill="none" stroke="#6c707e" stroke-width="2.6" stroke-linecap="round" stroke-linejoin="round"><ellipse cx="2412" cy="191" rx="14.3" ry="6"/><path d="M2397.7,191 V212.3 A14.3,6 0 0 0 2426.3,212.3 V191 M2397.7,198 A14.3,6 0 0 0 2426.3,198 M2397.7,205.2 A14.3,6 0 0 0 2426.3,205.2"/></g>
<rect x="2342" y="472" width="28" height="4" fill="#ffc9c9"/><rect x="2342" y="510" width="28" height="4" fill="#ffc9c9"/>
<rect x="2350" y="656" width="14" height="344" rx="7" fill="#c9c9c9"/>
<rect x="960.0" y="164" width="2" height="1208" fill="#ebecf0"/>
<rect x="994.0" y="210" width="2" height="308" fill="#ebecf0"/>
<rect x="994.0" y="650" width="2" height="132" fill="#ebecf0"/>
<rect x="994.0" y="914" width="2" height="176" fill="#ebecf0"/>
<rect x="994.0" y="1222" width="2" height="150" fill="#ebecf0"/>
<rect x="1026.0" y="298" width="2" height="88" fill="#ebecf0"/>
<rect x="1026.0" y="430" width="2" height="44" fill="#ebecf0"/>
<rect x="29.2" y="1442.8" width="14" height="14" rx="3" fill="#e7effd" stroke="#3574f0" stroke-width="2"/>
<path d="M282.5,1440.5 l6,7.6 l-6,7.6" fill="none" stroke="#818594" stroke-width="2" stroke-linecap="round" stroke-linejoin="round"/>
<path d="M378.5,1440.5 l6,7.6 l-6,7.6" fill="none" stroke="#818594" stroke-width="2" stroke-linecap="round" stroke-linejoin="round"/>
<path d="M516.5,1440.5 l6,7.6 l-6,7.6" fill="none" stroke="#818594" stroke-width="2" stroke-linecap="round" stroke-linejoin="round"/>
<circle cx="559.3" cy="1449.0" r="12.2" fill="#e7effd"/><path d="M572.23,1448.30 A12.95,12.95 0 1 0 558.60,1461.93" fill="none" stroke="#3574f0" stroke-width="1.9"/><path d="M563.60,1445.90 A5.3,5.3 0 1 0 558.80,1454.28" fill="none" stroke="#3574f0" stroke-width="1.9"/><rect x="560.65" y="1450.35" width="15.2" height="15.2" rx="3.5" fill="#f7f8fa"/><rect x="562.45" y="1452.15" width="11.6" height="11.6" rx="2" fill="#fff" stroke="#6c707e" stroke-width="1.9"/><path d="M562.45,1455.80 H574.05 M568.30,1455.80 V1463.75" stroke="#6c707e" stroke-width="1.8"/>
<path d="M1104.5,1390.5 l4.5,6.8 l-4.5,6.8" fill="none" stroke="#a8adbd" stroke-width="1.8" stroke-linecap="round" stroke-linejoin="round"/>
</svg>
<div class="t" style="left:932.40px;top:100.64px;font-size:27.00px;color:#000;letter-spacing:0.317px;">users_controller.rb</div>
<div class="t" style="left:889.00px;top:1372.64px;font-size:27.00px;color:#6c707e;letter-spacing:0.604px;">UsersController</div>
<div class="t" style="left:1129.00px;top:1372.64px;font-size:27.00px;color:#6c707e;letter-spacing:0.481px;">update</div>
<div class="t" style="left:52.60px;top:1424.48px;font-size:26.30px;color:#6c707e;letter-spacing:0.017px;">sample_rails_app</div>
<div class="t" style="left:311.00px;top:1424.48px;font-size:26.30px;color:#6c707e;">app</div>
<div class="t" style="left:406.70px;top:1424.48px;font-size:26.30px;color:#6c707e;letter-spacing:0.642px;">models</div>
<div class="t" style="left:585.00px;top:1424.48px;font-size:26.30px;color:#6c707e;letter-spacing:0.550px;">user.rb</div>
<div class="b" style="left:868px;top:166px;width:1470px;height:1206px;overflow:hidden"><div class="code" style="left:130px;top:2.5px"><span class="k">def </span><span class="m">update</span>
  <span class="v">@user</span> = <span class="c">User</span>.find(params[<span class="v">:id</span>])
  <span class="k">if</span> <span class="v">@user</span>.update(user_params)
    flash[<span class="v">:success</span>] = <span class="s">&quot;Profile updated&quot;</span>
    <span class="f">redirect_to</span> <span class="v">@user</span>
  <span class="k">else</span>
    <span class="f">render</span> <span class="s">&#x27;edit&#x27;</span>
  <span class="k">end</span>
<span class="k">end</span>

<span class="k">def </span><span class="m">destroy</span>
  <span class="c">User</span>.find(params[<span class="v">:id</span>]).destroy
  flash[<span class="v">:success</span>] = <span class="s">&quot;User deleted&quot;</span>
  <span class="f">redirect_to</span> users_url
<span class="k">end</span>

<span class="k">def </span><span class="m">following</span>
  <span class="v">@title</span> = <span class="s">&quot;Following&quot;</span>
  <span class="v">@user</span>  = <span class="c">User</span>.find(params[<span class="v">:id</span>])
  <span class="v">@users</span> = <span class="v">@user</span>.following.<span class="f">paginate</span>(<span class="v">page</span>: params[<span class="v">:page</span>])
  <span class="f">render</span> <span class="s">&#x27;show_follow&#x27;</span>
<span class="k">end</span>

<span class="k">def </span><span class="m">followers</span>
  <span class="v">@title</span> = <span class="s">&quot;Followers&quot;</span>
  <span class="v">@user</span>  = <span class="c">User</span>.find(params[<span class="v">:id</span>])
  <span class="v">@users</span> = <span class="v">@user</span>.followers.<span class="f">paginate</span>(<span class="v">page</span>: params[<span class="v">:page</span>])
  <span class="f">render</span> <span class="s">&#x27;show_follow&#x27;</span>
</div></div>
<div class="b" style="left:0;top:0;width:2452px;height:1px;background:#c4c2c4"></div><div class="b" style="left:0;top:1px;width:2452px;height:1px;background:#505157"></div>
</div></body></html>
